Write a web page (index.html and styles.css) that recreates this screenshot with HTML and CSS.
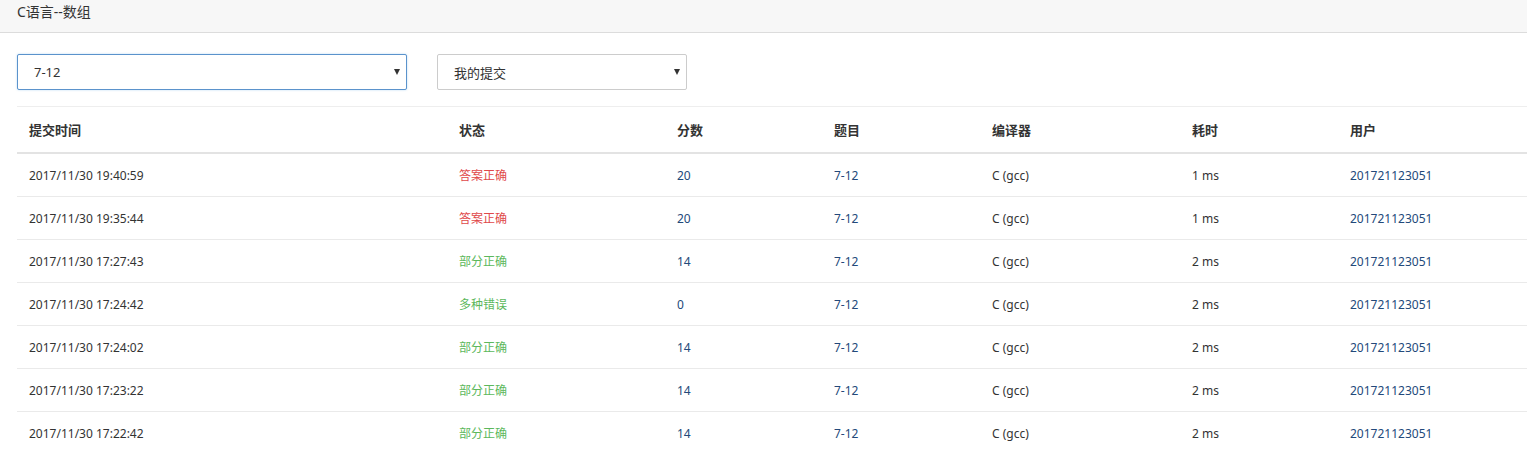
FILE: index.html
```html
<!DOCTYPE html>
<html lang="zh-CN">
<head>
    <meta charset="UTF-8">
    <title>C语言--数组</title>
    <link rel="stylesheet" href="styles.css">
</head>
<body>
    <!-- Title bar -->
    <div class="topbar">C语言--数组</div>

    <!-- Filters -->
    <div class="filters">
        <div class="select select-problem active">
            <span>7-12</span>
            <span class="caret"></span>
        </div>
        <div class="select select-scope">
            <span>我的提交</span>
            <span class="caret"></span>
        </div>
    </div>

    <!-- Submissions -->
    <div class="table-wrap">
        <table class="submissions">
            <colgroup>
                <col style="width: 430px">
                <col style="width: 218px">
                <col style="width: 157px">
                <col style="width: 158px">
                <col style="width: 200px">
                <col style="width: 158px">
                <col>
            </colgroup>
            <thead>
                <tr>
                    <th>提交时间</th>
                    <th>状态</th>
                    <th>分数</th>
                    <th>题目</th>
                    <th>编译器</th>
                    <th>耗时</th>
                    <th>用户</th>
                </tr>
            </thead>
            <tbody>
                <tr>
                    <td>2017/11/30 19:40:59</td>
                    <td class="ok">答案正确</td>
                    <td class="link">20</td>
                    <td class="link">7-12</td>
                    <td>C (gcc)</td>
                    <td>1 ms</td>
                    <td class="link">201721123051</td>
                </tr>
                <tr>
                    <td>2017/11/30 19:35:44</td>
                    <td class="ok">答案正确</td>
                    <td class="link">20</td>
                    <td class="link">7-12</td>
                    <td>C (gcc)</td>
                    <td>1 ms</td>
                    <td class="link">201721123051</td>
                </tr>
                <tr>
                    <td>2017/11/30 17:27:43</td>
                    <td class="partial">部分正确</td>
                    <td class="link">14</td>
                    <td class="link">7-12</td>
                    <td>C (gcc)</td>
                    <td>2 ms</td>
                    <td class="link">201721123051</td>
                </tr>
                <tr>
                    <td>2017/11/30 17:24:42</td>
                    <td class="partial">多种错误</td>
                    <td class="link">0</td>
                    <td class="link">7-12</td>
                    <td>C (gcc)</td>
                    <td>2 ms</td>
                    <td class="link">201721123051</td>
                </tr>
                <tr>
                    <td>2017/11/30 17:24:02</td>
                    <td class="partial">部分正确</td>
                    <td class="link">14</td>
                    <td class="link">7-12</td>
                    <td>C (gcc)</td>
                    <td>2 ms</td>
                    <td class="link">201721123051</td>
                </tr>
                <tr>
                    <td>2017/11/30 17:23:22</td>
                    <td class="partial">部分正确</td>
                    <td class="link">14</td>
                    <td class="link">7-12</td>
                    <td>C (gcc)</td>
                    <td>2 ms</td>
                    <td class="link">201721123051</td>
                </tr>
                <tr>
                    <td>2017/11/30 17:22:42</td>
                    <td class="partial">部分正确</td>
                    <td class="link">14</td>
                    <td class="link">7-12</td>
                    <td>C (gcc)</td>
                    <td>2 ms</td>
                    <td class="link">201721123051</td>
                </tr>
            </tbody>
        </table>
    </div>
</body>
</html>
```

FILE: styles.css
```css
body {
    margin: 0;
    font-family: "Noto Sans", "Noto Sans CJK SC", sans-serif;
    color: #333;
    background: #fff;
    overflow: hidden;
}

.topbar {
    height: 33px;
    line-height: 24px;
    padding-left: 17px;
    font-size: 14px;
    background-color: #f7f7f7;
    border-bottom: 1px solid #dcdcdc;
    box-sizing: border-box;
}

.filters {
    display: flex;
    gap: 30px;
    padding: 21px 0 0 17px;
}

.select {
    display: flex;
    align-items: center;
    justify-content: space-between;
    height: 36px;
    padding: 0 6px 0 16px;
    box-sizing: border-box;
    border: 1px solid #ccc;
    border-radius: 2px;
    font-size: 13px;
    background: #fff;
}

.select-problem {
    width: 390px;
}

.select-scope {
    width: 250px;
}

.select.active {
    border-color: #5b93cc;
    box-shadow: 0 0 2px rgba(102, 175, 233, 0.5);
}

.caret {
    width: 0;
    height: 0;
    border-left: 3.5px solid transparent;
    border-right: 3.5px solid transparent;
    border-top: 6px solid #333;
}

.table-wrap {
    padding: 16px 0 0 17px;
}

.submissions {
    width: 1510px;
    table-layout: fixed;
    border-collapse: collapse;
    font-size: 12px;
}

.submissions th {
    text-align: left;
    font-size: 13px;
    font-weight: bold;
    height: 45px;
    padding: 0 12px;
    border-top: 1px solid #eee;
    border-bottom: 2px solid #e3e3e3;
}

.submissions td {
    height: 42px;
    padding: 0 12px;
    border-bottom: 1px solid #eaeaea;
    white-space: nowrap;
}

.submissions tbody tr:last-child td {
    border-bottom: none;
}

.ok {
    color: #e0484a;
}

.partial {
    color: #5cb85c;
}

.link {
    color: #23497a;
}
```
